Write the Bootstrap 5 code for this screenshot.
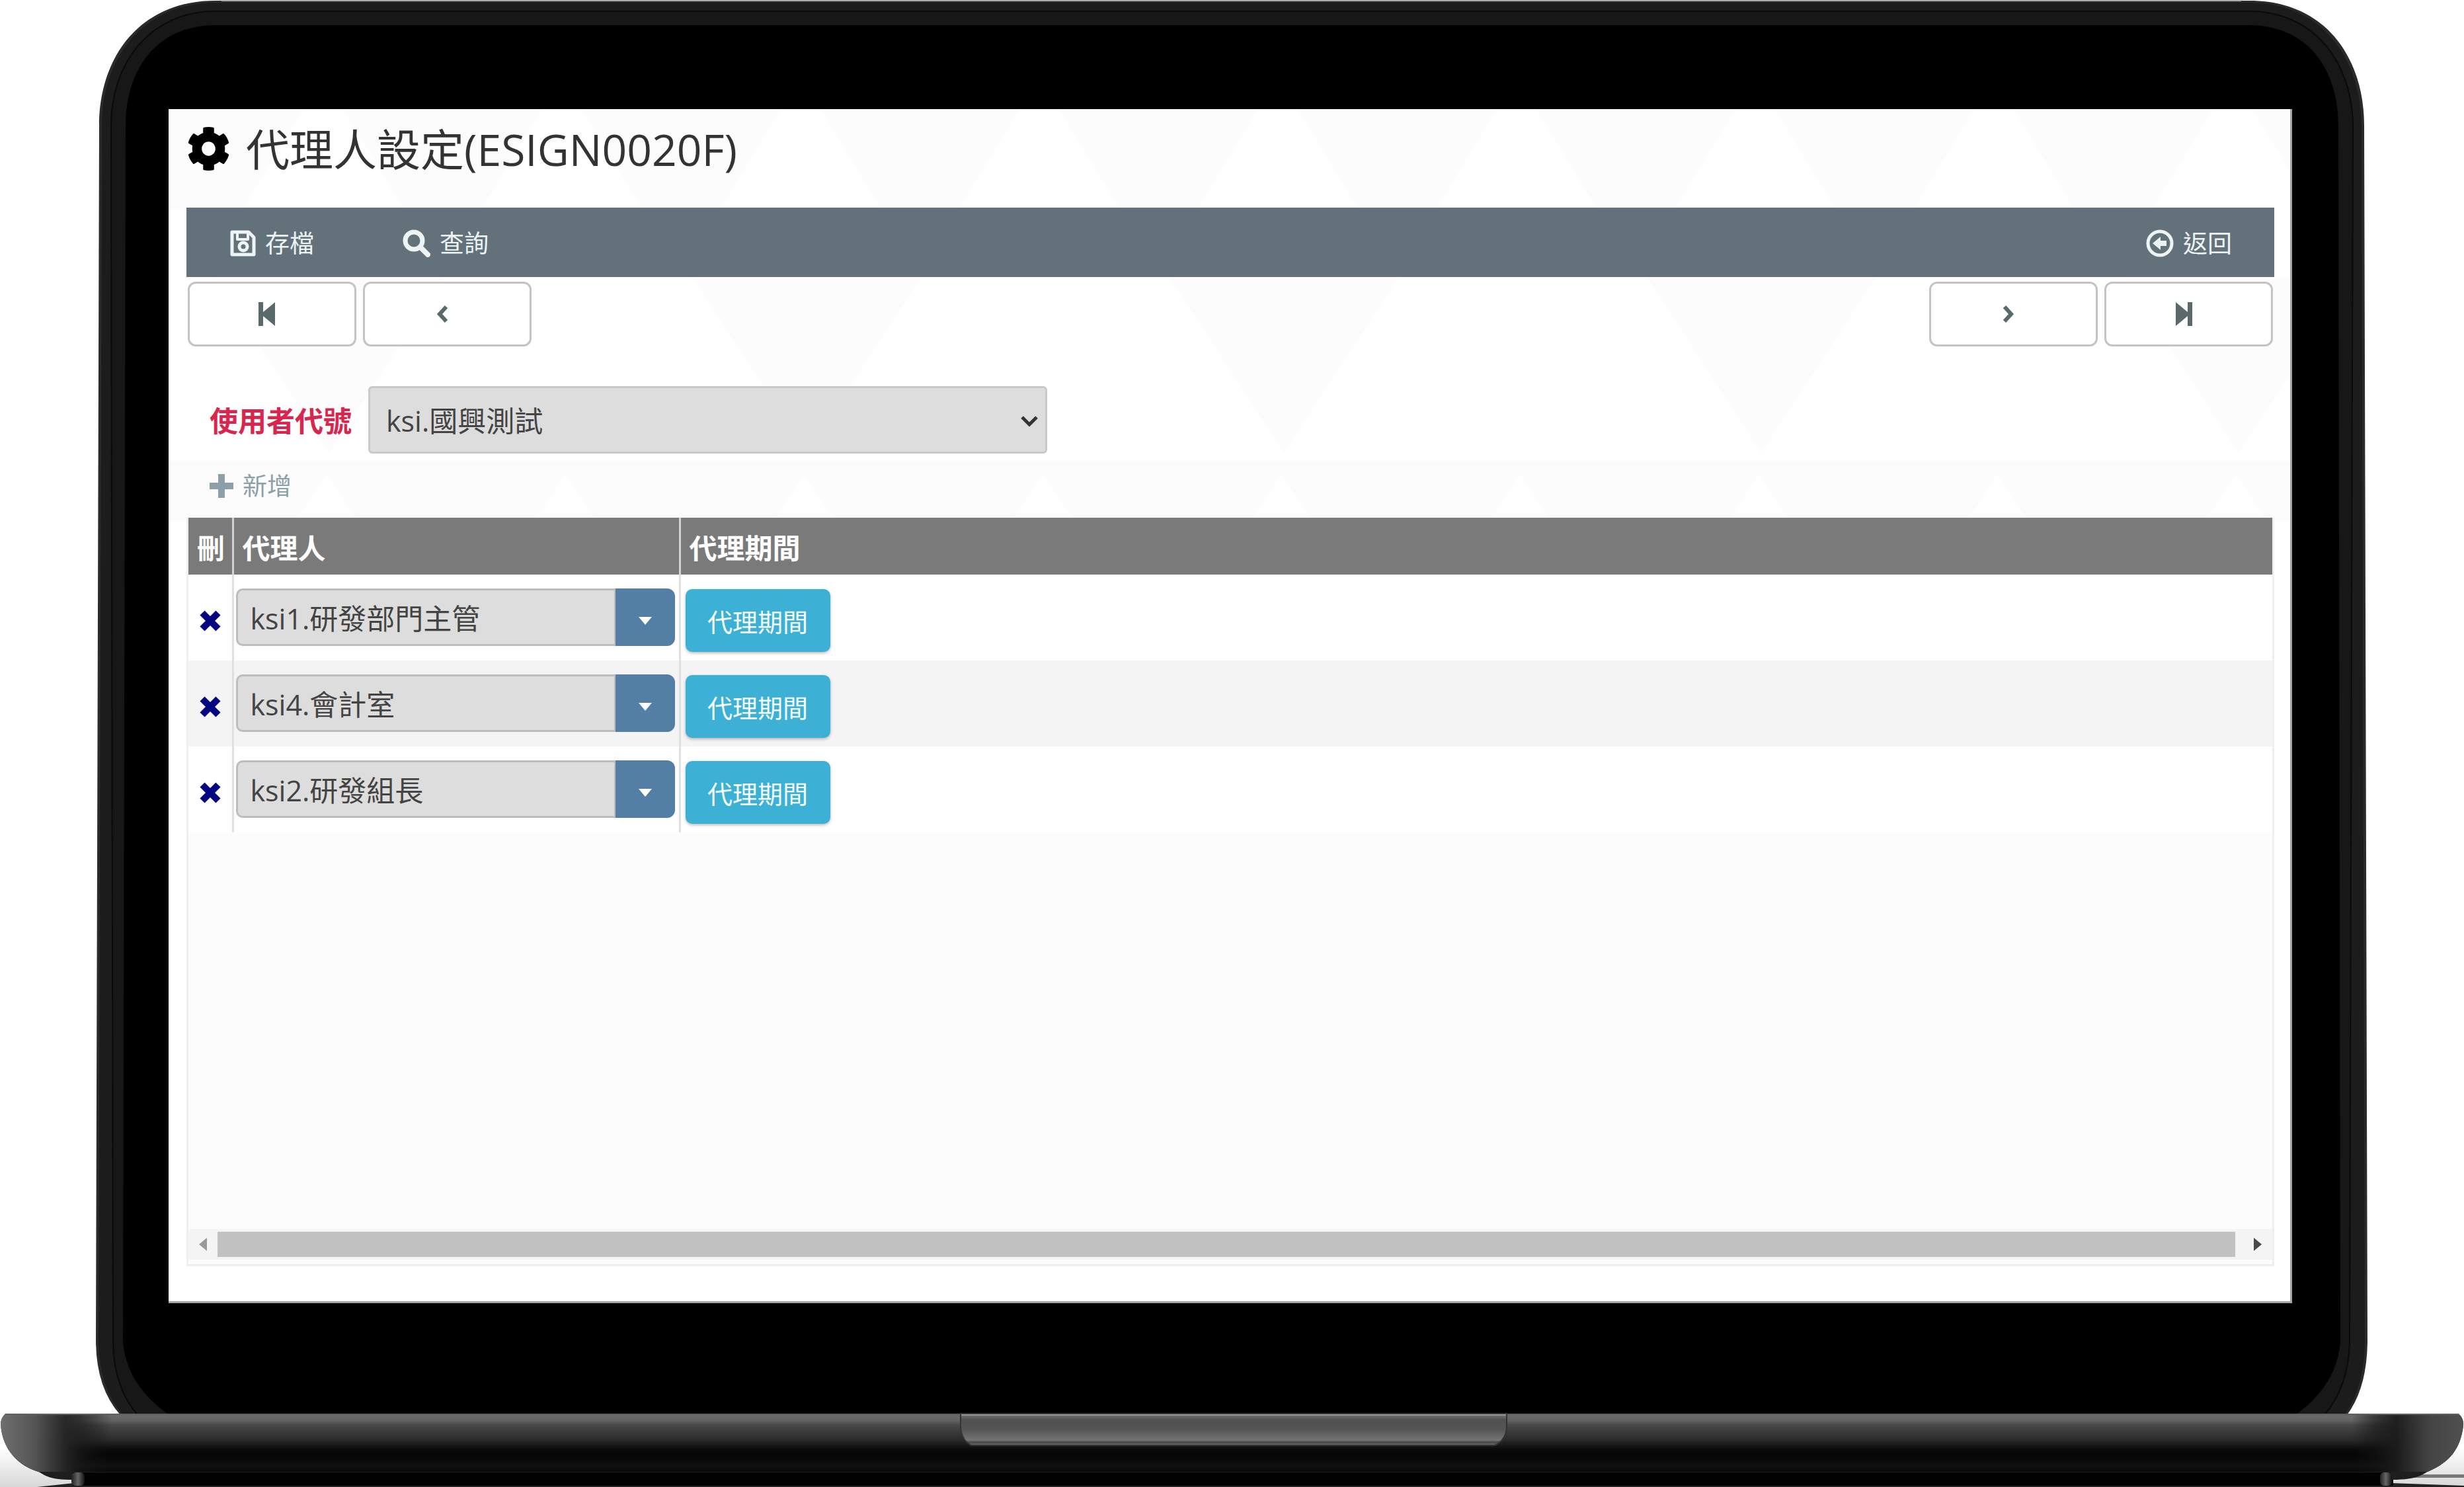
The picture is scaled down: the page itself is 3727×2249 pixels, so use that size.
<!DOCTYPE html>
<html lang="zh-Hant">
<head>
<meta charset="utf-8">
<meta name="viewport" content="width=device-width, initial-scale=1">
<title>代理人設定(ESIGN0020F)</title>
<link rel="stylesheet" href="https://cdn.jsdelivr.net/npm/bootstrap@5.3.0/dist/css/bootstrap.min.css">
<style>
  body { background: #fff; color: #444; font-family: "Open Sans", "Noto Sans CJK TC", sans-serif; font-size: 42px; line-height: 60px; }
  svg { display: block; flex: none; }
  .laptop { min-height: 100vh; }
  .laptop-lid { padding: 165px 260px 0 255px; }
  .laptop-art, .triangles { inset: 0; width: 100%; height: 100%; }
  .laptop-foot { height: 111px; }
  .chin { height: 167px; }
  .app-screen { background: #fff; border: solid #a6a6a6; border-width: 0 3px 3px 0; padding: 0 24px 53px 27px; }
  .page-title { height: 149px; padding: 0 2px 29px; gap: 25px; }
  .page-title h1 { font-size: 66px; line-height: 88px; font-weight: 400; color: #333; margin: 0; }
  .toolbar { background: #62717a; height: 105px; padding: 3px 64px 0 66px; font-size: 37px; }
  .toolbar .btn, .add-link { font-size: 37px; line-height: 60px; color: #eef3f5; padding: 0; border: 0; border-radius: 0; gap: 14px; }
  .toolbar-left { gap: 134px; }
  .pager { padding: 7px 2px 0; }
  .pager-pair { gap: 10px; }
  .pager .btn { width: 255px; height: 98px; border: 3px solid #c2c4c5; border-radius: 12px; background: #fff; color: #5a6a6c; padding: 0 16px 0 0; }
  .field-row { margin-top: 60px; padding-left: 35px; gap: 25px; }
  .field-row label { color: #d9264f; font-size: 43px; font-weight: 700; padding-top: 4px; }
  .user-picker { width: 1027px; }
  .user-picker select { height: 102px; font-size: 43px; line-height: 60px; padding: 4px 80px 0 24px; border: 3px solid #c9c9c9; border-radius: 6px; background: #ddd; color: #444; }
  .user-picker svg { right: 13px; top: 42px; pointer-events: none; }
  .add-row { height: 97px; padding-left: 35px; }
  .add-link { color: #8ba0a8; text-decoration: none; }
  .grid-panel { background: #fcfcfc; border: solid #efefef; border-width: 0 3px 3px; }
  .agents { margin: 0; font-size: 42px; line-height: 60px; table-layout: fixed; --bs-table-bg: #fff; }
  .agents th { height: 86px; padding: 6px 0 0 13px; background: #7a7a7a; color: #fff; font-weight: 700; vertical-align: middle; border: 0; }
  .agents td { height: 130px; padding: 0; border: 0; vertical-align: top; }
  .agents th + th { border-left: 3px solid #d2d2d2; }
  .agents td + td { border-left: 3px solid #e2dfdf; }
  .agents tbody tr:nth-child(even) td { background: #f4f4f4; }
  .col-del { width: 67px; }
  .col-agent { width: 676px; }
  .agents .del-btn { width: 64px; height: 130px; padding: 9px 0 0 16px; border: 0; color: #050580; }
  .combo { margin: 21px 0 0 3px; width: 664px; }
  .combo .form-control { height: 87px; padding: 0 19px; font-size: 43px; line-height: 60px; border: 3px solid #bdbdbd; border-radius: 10px; background: #ddd; color: #444; }
  .combo .btn { width: 90px; border-radius: 12px; border: 0; background: #537fa5; color: #fff; padding: 10px 0 0; }
  .period-btn { margin: 22px 0 0 7px; width: 219px; height: 95px; padding: 3px 0 0; font-size: 38px; line-height: 60px; background: #3db0d5; color: #f4fcff; border: 0; border-radius: 10px; box-shadow: 0 2px 4px #0004; }
  .scroll-track { height: 46px; margin-bottom: 7px; background: #f4f4f4; }
  .scroll-track .btn { width: 44px; height: 46px; padding: 0; border: 0; }
  .scroll-track .btn:last-child { width: 56px; padding-left: 12px; }
  .scroll-thumb { height: 38px; background: #c1c1c1; }
</style>
<script src="https://cdn.jsdelivr.net/npm/bootstrap@5.3.0/dist/js/bootstrap.bundle.min.js"></script>
</head>
<body>
<div class="laptop position-relative d-flex flex-column overflow-hidden">
  <!-- laptop body -->
  <svg class="laptop-art position-absolute" viewBox="0 0 3727 2249" preserveAspectRatio="none" aria-hidden="true">
    <defs>
      <linearGradient id="deck" x1="0" y1="0" x2="0" y2="1">
        <stop offset="0" stop-color="#5c5c5c"/><stop offset=".04" stop-color="#6a6a6a"/><stop offset=".12" stop-color="#626262"/><stop offset=".2" stop-color="#484848"/>
        <stop offset=".45" stop-color="#2b2b2b"/><stop offset=".62" stop-color="#090909"/><stop offset=".74" stop-color="#050505"/><stop offset=".9" stop-color="#101010"/><stop offset="1" stop-color="#080808"/>
      </linearGradient>
      <linearGradient id="edgeL" x1="0" x2="1"><stop offset="0" stop-color="#6e6e6e"/><stop offset=".3" stop-color="#565656"/><stop offset=".58" stop-color="#252525" stop-opacity=".95"/><stop offset=".75" stop-color="#181818" stop-opacity=".6"/><stop offset="1" stop-color="#111" stop-opacity="0"/></linearGradient>
      <linearGradient id="edgeR" x1="1" x2="0"><stop offset="0" stop-color="#505050"/><stop offset=".3" stop-color="#444"/><stop offset=".6" stop-color="#1c1c1c" stop-opacity=".95"/><stop offset=".78" stop-color="#151515" stop-opacity=".6"/><stop offset="1" stop-color="#111" stop-opacity="0"/></linearGradient>
      <linearGradient id="lip" x1="0" y1="0" x2="0" y2="1"><stop offset="0" stop-color="#c4c4c4"/><stop offset=".08" stop-color="#6a6a6a"/><stop offset=".2" stop-color="#505050"/><stop offset=".5" stop-color="#555"/><stop offset=".84" stop-color="#747474"/><stop offset=".9" stop-color="#484848"/><stop offset=".96" stop-color="#5c5c5c"/><stop offset="1" stop-color="#8a8a8a"/></linearGradient>
      <linearGradient id="foot" x1="0" x2="1"><stop offset="0" stop-color="#222"/><stop offset=".5" stop-color="#666"/><stop offset="1" stop-color="#111"/></linearGradient>
      <linearGradient id="ground" x1="0" y1="0" x2="0" y2="1"><stop offset="0" stop-color="#fff"/><stop offset="1" stop-color="#d8d8d8"/></linearGradient>
      <clipPath id="deckShape"><path d="M8 2138H3719Q3727 2146 3726 2156C3722 2192 3704 2212 3674 2225C3664 2229 3660 2238 3618 2238H110C74 2238 70 2232 58 2226C20 2214 2 2184 1 2152Q2 2144 8 2138Z"/></clipPath>
    </defs>
    <path fill="url(#ground)" d="M0 2190H110V2249H0ZM3615 2190H3727V2249H3615Z"/>
    <path fill="#777" d="M3640 2230H3727V2235H3640Z"/>
    <path fill="#222" d="M56 2249L112 2243H3616L3727 2247V2249Z"/>
    <path fill="#2a2a2a" d="M326 1H3402C3520 1 3576 90 3576 190L3581 2030Q3580 2100 3550 2140H182Q146 2100 145 2030L150 190C150 90 208 1 326 1Z"/>
    <path fill="#1c1c1c" d="M326 4H3402C3514 4 3571 90 3572 190L3577 2030Q3576 2100 3546 2140H186Q150 2100 149 2030L154 190C154 90 214 4 326 4Z"/>
    <path fill="#171717" stroke="#0a0a0a" stroke-width="2" d="M326 17H3402C3500 17 3558 94 3559 190L3554 2030Q3552 2100 3514 2142H210Q172 2100 171 2030L168 190C168 94 228 17 326 17Z"/>
    <path fill="#000" d="M326 38H3402C3490 38 3537 104 3537 190L3540 2030Q3534 2096 3472 2140H256Q192 2096 186 2030L190 190C190 104 238 38 326 38Z"/>
    <path fill="#a9aeab" d="M335 0H3390V2H335Z"/>
    <path fill="#060606" d="M110 2222H3620V2247H110Z"/>
    <g clip-path="url(#deckShape)">
      <path fill="url(#deck)" d="M0 2138H3727V2226H0Z"/>
      <path fill="#1e1e1e" d="M50 2226H3680V2240H50Z"/>
      <path fill="url(#edgeL)" d="M0 2140H170V2226H0Z"/>
      <path fill="url(#edgeR)" d="M3557 2140H3727V2226H3557Z"/>
    </g>
    <path fill="#020202" d="M110 2227H3616V2247H110Z"/>
    <rect x="108" y="2227" width="20" height="20" rx="6" fill="url(#foot)"/>
    <rect x="3600" y="2227" width="18" height="20" rx="6" fill="url(#foot)"/>
    <path fill="url(#lip)" stroke="#333" stroke-width="2" d="M1453 2138H2279V2158Q2278 2178 2261 2186H1469Q1454 2178 1453 2158Z"/>
  </svg>

  <div class="laptop-lid position-relative flex-grow-1 d-flex flex-column">
    <main class="app-screen position-relative flex-grow-1 d-flex flex-column">
      <!-- faint triangle backdrop -->
      <svg class="triangles position-absolute" aria-hidden="true">
        <defs>
          <pattern id="smallTri" width="361" height="260" patternUnits="userSpaceOnUse" x="264"><path fill="#fcfcfc" d="M0 0H301L210 150H91Z"/></pattern>
          <pattern id="bigTri" width="722" height="1000" patternUnits="userSpaceOnUse" x="600" y="0"><path fill="#fcfcfc" d="M915 255H1260L1087 520ZM193 255H538L365 520Z"/></pattern>
          <pattern id="peakTri" width="361" height="90" patternUnits="userSpaceOnUse" x="330" y="532"><path fill="#fcfcfc" d="M0 0H361V90H316L270 20L225 90H0Z"/></pattern>
        </defs>
        <rect width="100%" height="150" fill="url(#smallTri)"/>
        <rect y="255" width="100%" height="270" fill="url(#bigTri)"/>
        <rect y="532" width="100%" height="90" fill="url(#peakTri)"/>
      </svg>

      <header class="page-title position-relative d-flex align-items-center">
        <svg width="63" height="66" viewBox="12 8 488 496" preserveAspectRatio="none" fill="#000" aria-hidden="true"><path d="M487.4 315.7l-42.6-24.6c4.3-23.2 4.3-47 0-70.2l42.6-24.6c4.9-2.8 7.1-8.6 5.5-14-11.1-35.6-30-67.8-54.7-94.6-3.8-4.1-10-5.1-14.8-2.3L380.8 110c-17.9-15.4-38.5-27.3-60.8-35.1V25.8c0-5.6-3.9-10.5-9.4-11.7-36.7-8.2-74.3-7.8-109.2 0-5.5 1.2-9.4 6.1-9.4 11.7V75c-22.2 7.9-42.8 19.8-60.8 35.1L88.7 85.5c-4.9-2.8-11-1.9-14.8 2.3-24.7 26.7-43.6 58.9-54.7 94.6-1.7 5.4.6 11.2 5.5 14L67.3 221c-4.3 23.2-4.3 47 0 70.2l-42.6 24.6c-4.9 2.8-7.1 8.6-5.5 14 11.1 35.6 30 67.8 54.7 94.6 3.8 4.1 10 5.1 14.8 2.3l42.6-24.6c17.9 15.4 38.5 27.3 60.8 35.1v49.2c0 5.6 3.9 10.5 9.4 11.7 36.7 8.2 74.3 7.8 109.2 0 5.5-1.2 9.4-6.1 9.4-11.7v-49.2c22.2-7.9 42.8-19.8 60.8-35.1l42.6 24.6c4.9 2.8 11 1.9 14.8-2.3 24.7-26.7 43.6-58.9 54.7-94.6 1.5-5.5-.7-11.3-5.6-14.1zM256 336c-44.1 0-80-35.9-80-80s35.9-80 80-80 80 35.9 80 80-35.9 80-80 80z"/></svg>
        <h1>代理人設定(ESIGN0020F)</h1>
      </header>

      <nav class="toolbar position-relative d-flex align-items-center justify-content-between" aria-label="工具列">
        <div class="toolbar-left d-flex">
          <button type="button" class="btn d-flex align-items-center">
            <svg width="39" height="40" viewBox="0 0 39 40" fill="none" stroke="currentColor" stroke-width="5" stroke-linejoin="round" aria-hidden="true"><path d="M3 3H28L36 11V37H3Z"/><path d="M11 4V14H27V4" stroke-width="4"/><circle cx="20" cy="25" r="6" stroke-width="5"/></svg>
            <span>存檔</span>
          </button>
          <button type="button" class="btn d-flex align-items-center">
            <svg width="42" height="42" viewBox="0 0 42 42" fill="none" stroke="currentColor" aria-hidden="true"><circle cx="17" cy="17" r="13" stroke-width="7"/><path d="M27 27L38 38" stroke-width="8" stroke-linecap="round"/></svg>
            <span>查詢</span>
          </button>
        </div>
        <button type="button" class="btn d-flex align-items-center">
          <svg width="42" height="42" viewBox="0 0 42 42" aria-hidden="true"><circle cx="21" cy="21" r="18" fill="none" stroke="currentColor" stroke-width="5"/><path fill="currentColor" d="M10 21L22 11V17H31V25H22V31Z"/></svg>
          <span>返回</span>
        </button>
      </nav>

      <div class="pager position-relative d-flex justify-content-between">
        <div class="pager-pair d-flex">
          <button type="button" class="btn d-flex align-items-center justify-content-center" aria-label="第一筆"><svg width="28" height="38" viewBox="0 0 28 38" fill="currentColor" aria-hidden="true"><path d="M1 1H8V16L26 1V37L8 22V37H1Z"/></svg></button>
          <button type="button" class="btn d-flex align-items-center justify-content-center" aria-label="上一筆"><svg width="18" height="28" viewBox="0 0 18 28" fill="none" stroke="currentColor" stroke-width="6" aria-hidden="true"><path d="M15 3L5 14L15 25"/></svg></button>
        </div>
        <div class="pager-pair d-flex">
          <button type="button" class="btn d-flex align-items-center justify-content-center" aria-label="下一筆"><svg width="18" height="28" viewBox="0 0 18 28" fill="none" stroke="currentColor" stroke-width="6" aria-hidden="true"><path d="M3 3L13 14L3 25"/></svg></button>
          <button type="button" class="btn d-flex align-items-center justify-content-center" aria-label="最後一筆"><svg width="28" height="38" viewBox="0 0 28 38" fill="currentColor" aria-hidden="true"><path d="M27 1H20V16L2 1V37L20 22V37H27Z"/></svg></button>
        </div>
      </div>

      <div class="field-row position-relative d-flex align-items-center">
        <label for="userId">使用者代號</label>
        <div class="user-picker position-relative">
          <select id="userId" class="form-select"><option>ksi.國興測試</option></select>
          <svg class="position-absolute" width="28" height="22" viewBox="0 0 28 22" fill="none" stroke="#333" stroke-width="5" aria-hidden="true"><path d="M3 5L14 16L25 5"/></svg>
        </div>
      </div>

      <div class="add-row position-relative d-flex align-items-center">
        <a href="#" class="add-link d-flex align-items-center"><svg width="36" height="36" viewBox="0 0 36 36" fill="currentColor" aria-hidden="true"><path d="M13 0H23V13H36V23H23V36H13V23H0V13H13Z"/></svg><span>新增</span></a>
      </div>

      <section class="grid-panel position-relative flex-grow-1 d-flex flex-column justify-content-between">
        <table class="table agents">
          <colgroup><col class="col-del"><col class="col-agent"><col></colgroup>
          <thead><tr><th scope="col">刪</th><th scope="col">代理人</th><th scope="col">代理期間</th></tr></thead>
          <tbody>
            <tr>
              <td><button type="button" class="btn del-btn" aria-label="刪除"><svg width="34" height="34" viewBox="0 0 34 34" stroke="currentColor" stroke-width="10" aria-hidden="true"><path d="M5 5L29 29M29 5L5 29"/></svg></button></td>
              <td><div class="input-group combo"><input class="form-control" value="ksi1.研發部門主管" aria-label="代理人 1"><button type="button" class="btn d-flex align-items-center justify-content-center" aria-label="選擇代理人 1"><svg width="20" height="12" viewBox="0 0 20 12" fill="currentColor" aria-hidden="true"><path d="M0 0H20L10 12Z"/></svg></button></div></td>
              <td><button type="button" class="btn period-btn">代理期間</button></td>
            </tr>
            <tr>
              <td><button type="button" class="btn del-btn" aria-label="刪除"><svg width="34" height="34" viewBox="0 0 34 34" stroke="currentColor" stroke-width="10" aria-hidden="true"><path d="M5 5L29 29M29 5L5 29"/></svg></button></td>
              <td><div class="input-group combo"><input class="form-control" value="ksi4.會計室" aria-label="代理人 2"><button type="button" class="btn d-flex align-items-center justify-content-center" aria-label="選擇代理人 2"><svg width="20" height="12" viewBox="0 0 20 12" fill="currentColor" aria-hidden="true"><path d="M0 0H20L10 12Z"/></svg></button></div></td>
              <td><button type="button" class="btn period-btn">代理期間</button></td>
            </tr>
            <tr>
              <td><button type="button" class="btn del-btn" aria-label="刪除"><svg width="34" height="34" viewBox="0 0 34 34" stroke="currentColor" stroke-width="10" aria-hidden="true"><path d="M5 5L29 29M29 5L5 29"/></svg></button></td>
              <td><div class="input-group combo"><input class="form-control" value="ksi2.研發組長" aria-label="代理人 3"><button type="button" class="btn d-flex align-items-center justify-content-center" aria-label="選擇代理人 3"><svg width="20" height="12" viewBox="0 0 20 12" fill="currentColor" aria-hidden="true"><path d="M0 0H20L10 12Z"/></svg></button></div></td>
              <td><button type="button" class="btn period-btn">代理期間</button></td>
            </tr>
          </tbody>
        </table>
        <div class="scroll-track d-flex align-items-center">
          <button type="button" class="btn d-flex align-items-center justify-content-center" aria-label="向左捲動"><svg width="12" height="20" viewBox="0 0 12 20" fill="#9a9a9a" aria-hidden="true"><path d="M12 0V20L0 10Z"/></svg></button>
          <div class="scroll-thumb flex-grow-1"></div>
          <button type="button" class="btn d-flex align-items-center justify-content-center" aria-label="向右捲動"><svg width="12" height="20" viewBox="0 0 12 20" fill="#4a4a4a" aria-hidden="true"><path d="M0 0V20L12 10Z"/></svg></button>
        </div>
      </section>
    </main>
    <div class="chin"></div>
  </div>
  <div class="laptop-foot"></div>
</div>
</body>
</html>
